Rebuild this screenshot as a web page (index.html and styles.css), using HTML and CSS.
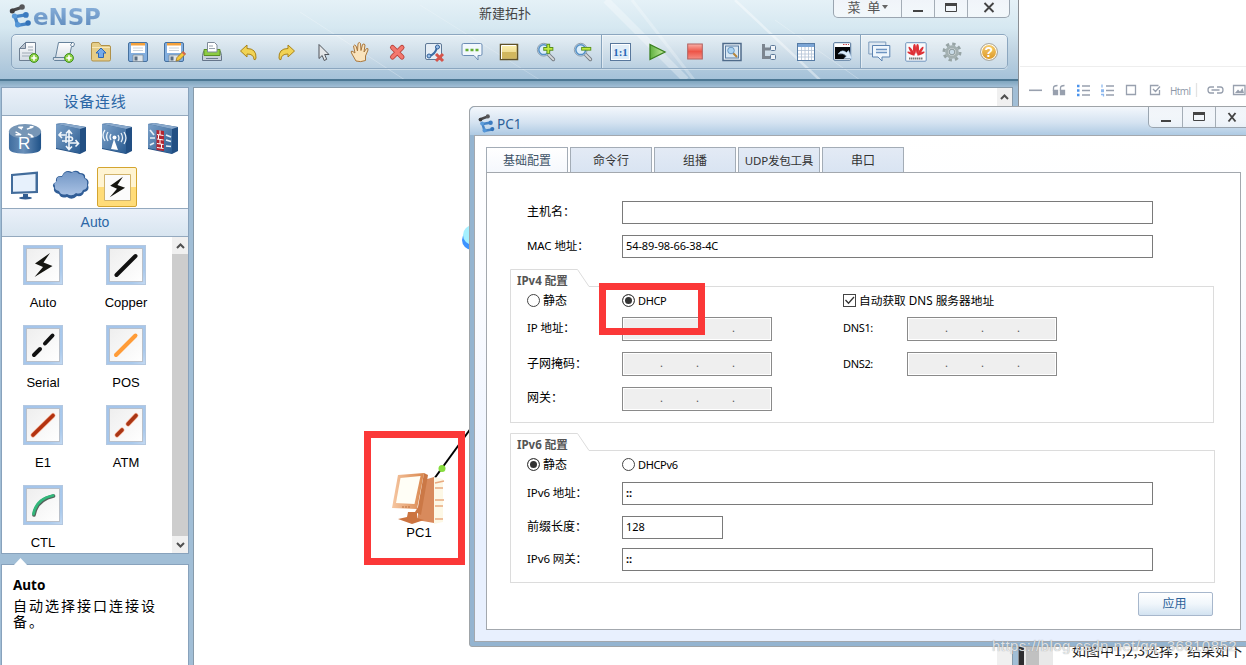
FILE: index.html
```html
<!DOCTYPE html>
<html lang="zh-CN">
<head>
<meta charset="utf-8">
<title>eNSP</title>
<link rel="stylesheet" href="styles.css">
</head>
<body>
<svg class="defs" width="0" height="0">
  <defs>
    <linearGradient id="gBlue" x1="0" y1="0" x2="1" y2="1"><stop offset="0" stop-color="#7ba0c8"/><stop offset=".5" stop-color="#5580ae"/><stop offset="1" stop-color="#285a90"/></linearGradient>
    <linearGradient id="gDrum" x1="0" y1="0" x2="1" y2="0"><stop offset="0" stop-color="#3f6d9f"/><stop offset=".45" stop-color="#6a90ba"/><stop offset="1" stop-color="#1f5288"/></linearGradient>
    <linearGradient id="gPage" x1="0" y1="0" x2="0" y2="1"><stop offset="0" stop-color="#fff"/><stop offset="1" stop-color="#d3dbe4"/></linearGradient>
    <linearGradient id="gGold" x1="0" y1="0" x2="0" y2="1"><stop offset="0" stop-color="#fff3b0"/><stop offset="1" stop-color="#e0c878"/></linearGradient>
    <linearGradient id="gBox" x1="0" y1="0" x2="1" y2="1"><stop offset="0" stop-color="#eee"/><stop offset="1" stop-color="#fff"/></linearGradient>
    <linearGradient id="gFrame" x1="0" y1="0" x2="1" y2="1"><stop offset="0" stop-color="#a4c4ea"/><stop offset=".8" stop-color="#a9c9ec"/><stop offset="1" stop-color="#c5daf2"/></linearGradient>
    <linearGradient id="gRed" x1="0" y1="0" x2="0" y2="1"><stop offset="0" stop-color="#f9b0a8"/><stop offset=".5" stop-color="#ee5548"/><stop offset="1" stop-color="#f58f85"/></linearGradient>
    <linearGradient id="gGreen" x1="0" y1="0" x2="1" y2="0"><stop offset="0" stop-color="#5fb040"/><stop offset="1" stop-color="#c8eea0"/></linearGradient>
    <linearGradient id="gCloud" x1="0" y1="0" x2="0" y2="1"><stop offset="0" stop-color="#7397c6"/><stop offset="1" stop-color="#a9c2e4"/></linearGradient>
    <linearGradient id="gPc" x1="0" y1="0" x2="1" y2="0"><stop offset="0" stop-color="#f6c7a2"/><stop offset="1" stop-color="#d9874e"/></linearGradient>
    <symbol id="plus" viewBox="0 0 10 10"><circle cx="5" cy="5" r="4.400" fill="#8fd045" stroke="#3f8f1d"/><path d="M5 2.300v5.400M2.300 5h5.400" stroke="#fff" stroke-width="1.600"/></symbol>
    <symbol id="logo" viewBox="0 0 22 22"><path d="M3 6L12 3" stroke="#4a4a4c" stroke-width="3" stroke-linecap="round"/><circle cx="3" cy="6.500" r="2.300" fill="#3e3e40"/><circle cx="12" cy="2.800" r="2.500" fill="#57575a"/><path d="M15.500 10L5.500 11.500L8 19.500L17.500 18" fill="none" stroke="#4584c6" stroke-width="3" stroke-linejoin="round"/><circle cx="5" cy="11" r="2.400" fill="#5b9bd9"/><circle cx="15.500" cy="10" r="2.600" fill="#3c7bc0"/><circle cx="8" cy="19" r="2.500" fill="#5597d8"/><circle cx="17.500" cy="17.500" r="2.500" fill="#3272b8"/></symbol>
    <symbol id="bolt" viewBox="0 0 40 40"><path d="M27 8L12 18.500L20 22L11.500 32L29.500 21L20.500 17.500Z" fill="#151510"/></symbol>
    <symbol id="frame" viewBox="0 0 40 40"><rect x=".5" y=".5" width="39" height="39" fill="url(#gFrame)" stroke="#b4c8e0"/><rect x="3.500" y="3.500" width="33" height="33" fill="url(#gBox)" stroke="#b9c0ca"/></symbol>
    <symbol id="floppy" viewBox="0 0 22 22"><rect x="1.500" y="1.500" width="19" height="19" rx="1.500" fill="#83aede" stroke="#46719f"/><path d="M4 2h14v10H4z" fill="#fff"/><path d="M4 2h14v2.500H4z" fill="#f5a13a"/><path d="M6 7h10M6 9.500h10" stroke="#ccd3da"/><path d="M6 14h10v6.500H6z" fill="#dde3e8" stroke="#7a8894" stroke-width=".7"/><path d="M7.500 15.500h3v4h-3z" fill="#5b6d80"/></symbol>
    <symbol id="lens" viewBox="0 0 24 24"><path d="M15 15l5 5" stroke="#767d84" stroke-width="4" stroke-linecap="round"/><path d="M15 15l5 5" stroke="#d4d7d9" stroke-width="2" stroke-linecap="round"/><circle cx="9.500" cy="9.500" r="7" fill="#c2dcf1" stroke="#8c9aa8"/><circle cx="9.500" cy="9.500" r="5.300" fill="#dceefa" stroke="#5590c5" stroke-width="1.600"/></symbol>
  </defs>
</svg>

<div class="desktop">
  <!-- Web editor behind the simulator -->
  <div class="editor">
    <div class="editor-tools">
      <svg width="226" height="20" viewBox="0 0 226 20" fill="none" stroke="#98a0ae" stroke-width="1.300">
        <path d="M9 10.300h13" stroke-width="1.600"/>
        <path d="M33.500 10.500h4v4h-4zM40.500 10.500h4v4h-4z" fill="#98a0ae"/><path d="M33.500 11V8q0-2.500 4-2.500M40.500 11V8q0-2.500 4-2.500"/>
        <path d="M62 6h8M62 10.500h8M62 15h8"/><path d="M57 6h2.500M57 10.500h2.500M57 15h2.500" stroke="#4b93ec" stroke-width="2.500"/>
        <path d="M86 6h8M86 10.500h8M86 15h8"/><path d="M82 4.500v3M81 10h3M81 11.500h3M81 14.500h3M83.500 14v2.500" stroke="#8cb8ef"/>
        <path d="M106.500 5.500h9v9h-9z"/><path d="M139.500 10v4.500h-9v-9h8M133 9l2.500 2.500 4.500-5"/>
        <path d="M176.500 3v14" stroke="#e3e3e3"/>
        <path d="M194 7h-3.500q-2.500 0-2.500 3t2.500 3h3.500M197 7h3.500q2.500 0 2.500 3t-2.500 3h-3.500M191.500 10h8"/>
        <path d="M213.500 5.500h11.500v9h-11.500z"/><path d="M215 13l3-3.500 2 2 2.500-3.500 1.500 5z" fill="#98a0ae" stroke="none"/>
      </svg>
      <span class="html-tool">Html</span>
    </div>
  </div>

  <div class="doc-strip"><i class="s-dark"></i><i class="s-grey"></i><i class="s-light"></i></div>
  <div class="doc-line">如图中1,2,3选择，结果如下</div>

  <!-- Simulator window -->
  <section class="ensp">
    <header class="ensp-head">
      <svg class="rays" width="1018" height="79" viewBox="0 0 1018 79" fill="none" stroke="#fff">
        <path d="M300 12L405 80" stroke-opacity=".25"/><path d="M420 5L540 80" stroke-opacity=".2"/>
        <path d="M606 0L686 80" stroke-opacity=".3" stroke-width="7"/><path d="M632 0L694 80" stroke-opacity=".25" stroke-width="3"/>
        <path d="M735 0L820 80" stroke-opacity=".4" stroke-width="2.500"/><path d="M775 20L860 80" stroke-opacity=".25"/>
      </svg>
      <div class="titlebar">
        <div class="brand"><svg width="24" height="24"><use href="#logo"/></svg><b>eNSP</b></div>
        <div class="title">新建拓扑</div>
        <div class="win-buttons">
          <span class="menu">菜&nbsp;&nbsp;单<i class="caret"></i></span>
          <span><svg width="12" height="12" viewBox="0 0 12 12"><path d="M1 9h10" stroke="#444" stroke-width="2"/></svg></span>
          <span><svg width="12" height="12" viewBox="0 0 12 12"><path d="M.5 1.500h11v8h-11z" fill="none" stroke="#444"/><path d="M0 2.500h12" stroke="#444" stroke-width="3"/></svg></span>
          <span class="close"><svg width="12" height="11" viewBox="0 0 12 11"><path d="M1.500 1l9 9M10.500 1l-9 9" stroke="#444" stroke-width="1.900"/></svg></span>
        </div>
      </div>
      <nav class="toolbar">
        <div class="tools first">
          <span><svg width="22" height="22" viewBox="0 0 22 22"><path d="M7.500 1.500h10v18H1.500v-12z" fill="url(#gPage)" stroke="#6e7f92"/><path d="M7.500 1.500v6h-6z" fill="#b9c2cc" stroke="#6e7f92"/><path d="M10 6h5M10 9h5M4 12h11M4 15h8" stroke="#9ea9b5"/><use href="#plus" x="11" y="12" width="10" height="10"/></svg></span>
          <span><svg width="24" height="22" viewBox="0 0 24 22"><path d="M6.500 1.500h15q2 1 0 4h-2l-3 14H2.500q-2-1-1-3h2z" fill="url(#gPage)" stroke="#66829b"/><path d="M1.500 16.500h14M19 5q-1-2 1-3" stroke="#66829b" fill="none"/><use href="#plus" x="12" y="12" width="10" height="10"/></svg></span>
          <span><svg width="22" height="22" viewBox="0 0 22 22"><path d="M1.500 3q0-1.500 1.500-1.500h6l2 3h8q1.500 0 1.500 1.500v12.500q0 1.500-1.500 1.500H3q-1.500 0-1.500-1.500z" fill="#e5cd88" stroke="#b0914a"/><path d="M2 6.500h18" stroke="#f7e8b8"/><path d="M11 7l5 5h-2.500v4.500h-5V12H6z" fill="#74aaea" stroke="#2c67b5"/></svg></span>
          <span><svg width="22" height="22"><use href="#floppy"/></svg></span>
          <span><svg width="23" height="22" viewBox="0 0 23 22"><use href="#floppy" width="22" height="22"/><path d="M13 20l1-3.500 6-6 2.500 2.500-6 6z" fill="#f6c83b" stroke="#9a7420" stroke-width=".8"/><path d="M19.500 11l2.500 2.500" stroke="#d8604f" stroke-width="2"/></svg></span>
          <span><svg width="22" height="22" viewBox="0 0 22 22"><path d="M2.500 10.500h17l1 4v5h-19v-5z" fill="#c7d0db" stroke="#65758a"/><path d="M3 8.500h16v6H3z" fill="#8dcc43" stroke="#5c8e26"/><path d="M6.500 1.500h7l2.500 2.500v7h-9.500z" fill="#fff" stroke="#7f8b99"/><path d="M8 5h4M8 7.500h6" stroke="#98a3af"/><path d="M5 17.500h12" stroke="#6c7b8d"/></svg></span>
          <span><svg width="20" height="20" viewBox="0 0 20 20"><path d="M1.500 9L8 3v3.500q9.500 0 9 9.500q-.5 2.500-2 1.500Q15 12 8 12V15z" fill="#f1d354" stroke="#a98318"/></svg></span>
          <span><svg width="20" height="20" viewBox="0 0 20 20"><path d="M18.500 9L12 3v3.500q-9.500 0-9 9.500q.5 2.500 2 1.500Q5 12 12 12V15z" fill="#f1d354" stroke="#a98318"/></svg></span>
          <span><svg width="14" height="20" viewBox="0 0 14 20"><path d="M3 2.500v14l3.200-3 2 5 2.500-1.200-2-4.800H13z" fill="#e4e6e8" stroke="#4e535a"/></svg></span>
          <span><svg width="20" height="22" viewBox="0 0 20 22"><path d="M6 20L2 13q-2-3 0-3l3 2L3.500 5q1-2 2.500 0l1.500 5L8 2.500q1.500-2 2.500 0l.5 7 1.500-6q2-1.500 2.500.5l-1 7 2.500-3.500q2-.5 1.500 1.500L15.500 15v4.500q-5 2-9.500.5z" fill="#fae3bc" stroke="#a9773d"/></svg></span>
          <span><svg width="18" height="18" viewBox="0 0 18 18"><path d="M4.500 4.500l9.500 9.500M14 4.500l-9.500 9.500" stroke="#b8443d" stroke-width="5" stroke-linecap="round"/><path d="M4.500 4.500l9.500 9.500M14 4.500l-9.500 9.500" stroke="#f3786e" stroke-width="3.200" stroke-linecap="round"/></svg></span>
          <span><svg width="22" height="22" viewBox="0 0 22 22"><rect x="2.500" y="2.500" width="16" height="16" rx="1.500" fill="#e6eef5" stroke="#5e7896"/><path d="M6 15Q12.500 13.500 14 6" stroke="#3d6ea5" stroke-width="2" fill="none"/><circle cx="6" cy="15" r="2" fill="#9dc0e8" stroke="#2f5f99"/><circle cx="14.500" cy="6" r="2" fill="#9dc0e8" stroke="#2f5f99"/><path d="M13 13l7 7M20 13l-7 7" stroke="#d5544b" stroke-width="3"/></svg></span>
          <span><svg width="22" height="20" viewBox="0 0 22 20"><path d="M2.500 1.500h17q1.500 0 1.500 1.500v9q0 1.500-1.500 1.500H17v4.500l-4-4.500H2.500Q1 13.500 1 12V3q0-1.500 1.500-1.500z" fill="#f2f8fd" stroke="#6b8cb4"/><path d="M4.500 8h3M9.500 8h3M14.500 8h3" stroke="#63ad32" stroke-width="2.600"/></svg></span>
          <span><svg width="20" height="18" viewBox="0 0 20 18"><rect x="1.500" y="1.500" width="17" height="15" fill="url(#gGold)" stroke="#5f5127" stroke-width="1.500"/><path d="M3 9h14v6H3z" fill="#d1b75e"/><path d="M2.500 16V2.500H17" fill="none" stroke="#fff"/></svg></span>
          <span><svg width="22" height="22" viewBox="0 0 24 24"><use href="#lens" width="24" height="24"/><path d="M14.500 3v11M9 8.500h11" stroke="#57901d" stroke-width="4"/><path d="M14.500 4v9M10 8.500h9" stroke="#c1e93f" stroke-width="2"/></svg></span>
          <span><svg width="22" height="22" viewBox="0 0 24 24"><use href="#lens" width="24" height="24"/><path d="M10 8.500h11" stroke="#57901d" stroke-width="4"/><path d="M11 8.500h9" stroke="#c1e93f" stroke-width="2"/></svg></span>
        </div>
        <div class="tools">
          <span><i class="ratio">1:1</i></span>
          <span><svg width="19" height="20" viewBox="0 0 19 20"><path d="M2 2.500v15l15-7.500z" fill="url(#gGreen)" stroke="#3a8020" stroke-width="1.300"/></svg></span>
          <span><svg width="16" height="17" viewBox="0 0 16 17"><rect x=".7" y="1" width="14.600" height="15" fill="url(#gRed)" stroke="#b0605e"/></svg></span>
          <span><svg width="20" height="20" viewBox="0 0 20 20"><rect x="1" y="1.500" width="18" height="17" fill="#e6eff6" stroke="#4f6b8a" stroke-width="1.500"/><rect x="3.500" y="4" width="13" height="12" fill="#d6e6f3" stroke="#5b7da2"/><path d="M11 11l4 4" stroke="#b6853a" stroke-width="2"/><circle cx="9" cy="8.500" r="3.300" fill="#abd3f2" stroke="#6b96bf"/></svg></span>
          <span><svg width="18" height="18" viewBox="0 0 18 18"><path d="M3.500 1v13.500H10M3.500 6H10" fill="none" stroke="#7c858f" stroke-width="3"/><rect x="10.500" y="2.500" width="5" height="5" rx="1" fill="#f0f4f8" stroke="#5c7898"/><rect x="10.500" y="11.500" width="5" height="5" rx="1" fill="#f0f4f8" stroke="#5c7898"/></svg></span>
          <span><svg width="18" height="18" viewBox="0 0 18 18"><rect x=".5" y=".5" width="17" height="17" fill="#fff" stroke="#567ba4"/><path d="M1 1h16v3H1z" fill="#7ba5d5"/><path d="M1 7.500h16M1 11h16M1 14h16M4.500 4v13M8 4v13M11.500 4v13M14.500 4v13" stroke="#b3c3d6" stroke-width=".8"/></svg></span>
          <span><svg width="20" height="19" viewBox="0 0 20 19"><rect x=".7" y=".7" width="17" height="17.500" rx="1" fill="#fff" stroke="#4c6e95"/><path d="M2 5h15v12H2z" fill="#050608"/><path d="M10 2.500h6" stroke="#c44" stroke-dasharray="1.500 1"/><path d="M5 12q4-5.500 8.500-1.500l2-2 3.500 8h-8l2.500-2.500q-3.500-3.500-8.500-2z" fill="#dcecfa" stroke="#a9c9e8" stroke-width=".5"/></svg></span>
        </div>
        <div class="tools last">
          <span><svg width="23" height="21" viewBox="0 0 23 21"><path d="M.8 1h17v12h-17z" fill="#dfe9f2" stroke="#7d9cbd"/><path d="M4.500 4.500h17.300v11.500H14v4l-4-4H4.500z" fill="#eff6fc" stroke="#5d83b1"/><path d="M8 8.500h11M8 11.500h11" stroke="#6d94c1" stroke-width="1.400"/></svg></span>
          <span><svg width="22" height="20" viewBox="0 0 22 20"><rect x=".7" y=".7" width="20.500" height="18.500" rx="1" fill="#f8fafc" stroke="#6f94bd"/><g fill="#de3036"><ellipse cx="9.500" cy="7" rx="1.500" ry="5"/><ellipse cx="12.500" cy="7" rx="1.500" ry="5"/><ellipse cx="6.500" cy="9" rx="1.300" ry="5" transform="rotate(-33 6.500 9)"/><ellipse cx="15.500" cy="9" rx="1.300" ry="5" transform="rotate(33 15.500 9)"/><ellipse cx="6" cy="11.500" rx="1.200" ry="4" transform="rotate(-65 6 11.500)"/><ellipse cx="16" cy="11.500" rx="1.200" ry="4" transform="rotate(65 16 11.500)"/></g><path d="M4 16.500h14" stroke="#777" stroke-width="1.800" stroke-dasharray="1.500 .5"/></svg></span>
          <span><svg width="20" height="20" viewBox="0 0 20 20"><circle cx="10" cy="10" r="8" fill="none" stroke="#97a4a5" stroke-width="3" stroke-dasharray="3.300 2.980"/><circle cx="10" cy="10" r="5.300" fill="#d3dadb" stroke="#a3b0b1" stroke-width="3"/><circle cx="10" cy="10" r="2.800" fill="#c9dbe7" stroke="#8b999c"/></svg></span>
          <span><i class="help">?</i></span>
        </div>
      </nav>
    </header>

    <div class="ensp-body">
      <aside class="sidebar">
        <div class="palette">
          <h2 class="bar">设备连线</h2>
          <div class="devices">
            <span><svg width="34" height="33" viewBox="0 0 36 34"><path d="M1 8v18q0 6 17 6t17-6V8z" fill="url(#gDrum)"/><ellipse cx="18" cy="8.500" rx="17" ry="7.800" fill="#7796b6"/><path d="M8 9l6 3M8 12h5M15 6l-4-2h5M21 11l5 2M24 14h3M20 6l6-2M23 3.500h4" stroke="#fff" stroke-width="1.500" fill="none"/></svg><b class="r">R</b></span>
            <span><svg width="34" height="34" viewBox="0 0 34 34"><path d="M2 2l6-1 24 4v24l-6 3L2 27z" fill="#224f83"/><path d="M2 2l24 5v24.500L2 26z" fill="url(#gBlue)"/><path d="M2 2l6-1 24 4-6 2z" fill="#88a8cb"/><path d="M5 13h8M7.500 10L5 13l3 3M15 19V9M12 11.500L15 8.500l3 3.500M15 19v8M12 24l3 3.500 3-3M16 21h8M21.500 18l3 3.500-3 3M12 21v-6q6-1 6.500 1.500T15 19H8" fill="none" stroke="#f2f7fb" stroke-width="1.600"/></svg></span>
            <span><svg width="34" height="34" viewBox="0 0 34 34"><path d="M2 2l6-1 24 4v24l-6 3L2 27z" fill="#224f83"/><path d="M2 2l24 5v24.500L2 26z" fill="url(#gBlue)"/><path d="M2 2l6-1 24 4-6 2z" fill="#88a8cb"/><path d="M14 17l-3 10 7 1z" fill="#fff"/><circle cx="14.500" cy="15.500" r="2" fill="#fff"/><path d="M11 12q-2 3 0 6M8 10q-3 4.500 0 9M5 8q-4 5 0 11M18 13q2 3 0 6M21 11q3 5 0 9M24 10q4 6 0 12" fill="none" stroke="#e9f1f8" stroke-width="1.300"/></svg></span>
            <span><svg width="34" height="34" viewBox="0 0 34 34"><path d="M2 2l6-1 24 4v24l-6 3L2 27z" fill="#224f83"/><path d="M2 2l24 5v24.500L2 26z" fill="url(#gBlue)"/><path d="M2 2l6-1 24 4-6 2z" fill="#88a8cb"/><path d="M10.500 8l7.500 1v20l-7.500-1z" fill="#b32430"/><path d="M11 12.500l6.500 1M11 17l6.500 1M11 21.500l6.500 1M11 25.500l6.500 1M14 8.500v4.500M14 18v4M12.500 13v4M15.500 22v4" stroke="#fff"/><path d="M4 8l4 5M4 16h5M4 23l4-2M20 13l5 2M20 18l5 1.500M20 24l5 .5" stroke="#e6eef6" stroke-width="1.700"/></svg></span>
            <span><svg width="34" height="32" viewBox="0 0 34 32"><path d="M3 5l27-2.500v21.500L3 25z" fill="#426c9b"/><path d="M5 7l22.500-2v17L5 22.700z" fill="#e7f1fc"/><path d="M15 25h5v4h-5z" fill="#325e91"/><ellipse cx="17.500" cy="29" rx="6.500" ry="1.500" fill="#315c90"/></svg></span>
            <span><svg width="38" height="32" viewBox="0 0 38 32"><path d="M7 25q-6-1-5-6-3-4 2-6-1-7 6-6 3-7 10-4 5-3 8 1 6 0 5 5 5 2 3 7 2 6-4 7-1 5-7 4-5 5-10 1-6 2-8-3z" fill="#315e97"/><path d="M7 22q-5-1-4-5-2-3 2-5-1-5 5-4 3-7 9-4 5-3 8 1 5 0 5 4 4 2 3 6 1 5-4 6-2 5-7 3-4 4-9 1-6 2-8-3z" fill="url(#gCloud)"/></svg></span>
            <span class="selected"><svg width="27" height="27" viewBox="0 0 27 27"><path d="M.5.5h26v26H.5z" fill="#fbfbfb" stroke="#d1b46d"/><use href="#bolt" x="-4" y="-4" width="34" height="34"/></svg></span>
          </div>
          <h2 class="bar auto">Auto</h2>
          <div class="cables">
            <div class="cable-grid">
              <figure><svg width="40" height="40"><use href="#frame"/><use href="#bolt"/></svg><figcaption>Auto</figcaption></figure>
              <figure><svg width="40" height="40"><use href="#frame"/><path d="M10.500 30L29.500 11" stroke="#111" stroke-width="4" stroke-linecap="round"/></svg><figcaption>Copper</figcaption></figure>
              <figure><svg width="40" height="40"><use href="#frame"/><path d="M11 30l6-6M22 18.500l7.500-8" stroke="#111" stroke-width="4" stroke-linecap="round"/></svg><figcaption>Serial</figcaption></figure>
              <figure><svg width="40" height="40"><use href="#frame"/><path d="M10 30L29.500 10.500" stroke="#ff9c38" stroke-width="4" stroke-linecap="round"/></svg><figcaption>POS</figcaption></figure>
              <figure><svg width="40" height="40"><use href="#frame"/><path d="M10 30L30 10.500" stroke="#f5b69d" stroke-width="5" stroke-linecap="round"/><path d="M10 30L30 10.500" stroke="#b33210" stroke-width="3.700" stroke-linecap="round"/></svg><figcaption>E1</figcaption></figure>
              <figure><svg width="40" height="40"><use href="#frame"/><path d="M11 30l5-5M22 19l8-8.500" stroke="#f5b69d" stroke-width="5" stroke-linecap="round"/><path d="M11 30l5-5M22 19l8-8.500" stroke="#a93514" stroke-width="3.700" stroke-linecap="round"/></svg><figcaption>ATM</figcaption></figure>
              <figure><svg width="40" height="40"><use href="#frame"/><path d="M11 30Q13.500 15 30.500 11" fill="none" stroke="#55615a" stroke-width="3.600" stroke-linecap="round"/><path d="M10.500 29Q13 14 30 10.500" fill="none" stroke="#32b77b" stroke-width="2.800" stroke-linecap="round"/></svg><figcaption>CTL</figcaption></figure>
            </div>
            <div class="scroll">
              <i><svg width="9" height="6"><path d="M1 5l3.500-3.500L8 5" fill="none" stroke="#505050" stroke-width="2"/></svg></i>
              <i><svg width="9" height="6"><path d="M1 1l3.500 3.500L8 1" fill="none" stroke="#505050" stroke-width="2"/></svg></i>
            </div>
          </div>
        </div>
        <svg class="notch" width="16" height="8" viewBox="0 0 16 8"><path d="M0 8L7.500 0L15 8z" fill="#fff"/></svg>
        <div class="info"><b>Auto</b><p>自动选择接口连接设备。</p></div>
      </aside>
      <main class="canvas">
        <svg class="topology" width="803" height="577" viewBox="194 88 803 577">
          <ellipse cx="472" cy="240" rx="10" ry="10" fill="#3d93ff"/><ellipse cx="473" cy="235" rx="10" ry="10" fill="#a5f0ff"/>
          <path d="M434 479L474 424" stroke="#000" stroke-width="2"/>
          <path d="M424 480l10-3v46l-17-3z" fill="#d88a5c"/><path d="M434 477l9 2v43l-9 2z" fill="#fdf8e6"/><path d="M435 483l9-2M435 488h8M435 500h9M435 506h8M435 519h8" stroke="#e9aa80" stroke-width="1.300"/>
          <path d="M398 475l26-2-7 36-25-1z" fill="url(#gPc)"/><path d="M400.500 478l20-2-6 28-18.500-1z" fill="#fffef6"/><path d="M424 473l4 2-7 40-6-3 3-5z" fill="#cb7846"/><path d="M408 512h9v6l7 2-12 4-14-5 9-2z" fill="#cc7440"/><path d="M402 507h8" stroke="#bd703d" stroke-dasharray="2 1"/>
          <circle cx="442" cy="468.500" r="3.500" fill="#86dc3e"/>
          <text x="419" y="537" text-anchor="middle" class="node-name">PC1</text>
        </svg>
        <div class="vscroll"><svg width="9" height="6"><path d="M1 5l3.500-3.500L8 5" fill="none" stroke="#505050" stroke-width="2"/></svg></div>
      </main>
    </div>
  </section>

  <!-- PC1 configuration dialog -->
  <section class="dialog">
    <header class="dialog-head">
      <svg width="18" height="19" viewBox="0 0 22 22" preserveAspectRatio="none"><use href="#logo"/></svg>
      <span class="dialog-title">PC1</span>
      <div class="win-buttons">
        <span><svg width="12" height="12" viewBox="0 0 12 12"><path d="M1 10h10" stroke="#444" stroke-width="2"/></svg></span>
        <span><svg width="12" height="12" viewBox="0 0 12 12"><path d="M.5 1.500h11v8h-11z" fill="none" stroke="#444"/><path d="M0 2.500h12" stroke="#444" stroke-width="3"/></svg></span>
        <span><svg width="10" height="12" viewBox="0 0 10 12"><path d="M1.500 2l7 8.500M8.500 2l-7 8.500" stroke="#444" stroke-width="1.900"/></svg></span>
      </div>
    </header>
    <div class="dialog-body">
      <div class="tabs"><span class="on">基础配置</span><span>命令行</span><span>组播</span><span class="udp">UDP发包工具</span><span>串口</span></div>
      <div class="panel">
        <div class="basic">
          <label class="zh">主机名：</label><div class="field"></div>
          <label>MAC 地址：</label><div class="field mac">54-89-98-66-38-4C</div>
        </div>

        <div class="group v4">
          <div class="group-head"><svg width="79" height="18" viewBox="0 0 79 18"><path d="M.5 18V.5H67.500L79 17.500" fill="none" stroke="#dcdcdc"/></svg><b>IPv4 配置</b></div>
          <div class="group-body">
            <div class="row choice"><span class="zh"><i class="radio"></i>静态</span><span class="latin"><i class="radio checked"></i>DHCP</span><span class="dns"><i class="check"><svg width="11" height="11"><path d="M1.500 5l3 3.200L10 2" fill="none" stroke="#333" stroke-width="1.300"/></svg></i>自动获取 DNS 服务器地址</span></div>
            <div class="row"><label>IP 地址：</label><div class="ip"><i>.</i><i>.</i><i>.</i></div><label class="latin">DNS1:</label><div class="ip"><i>.</i><i>.</i><i>.</i></div></div>
            <div class="row mask"><label class="zh">子网掩码：</label><div class="ip"><i>.</i><i>.</i><i>.</i></div><label class="latin">DNS2:</label><div class="ip"><i>.</i><i>.</i><i>.</i></div></div>
            <div class="row"><label class="zh">网关：</label><div class="ip"><i>.</i><i>.</i><i>.</i></div></div>
          </div>
        </div>

        <div class="group v6">
          <div class="group-head"><svg width="79" height="18" viewBox="0 0 79 18"><path d="M.5 18V.5H67.500L79 17.500" fill="none" stroke="#dcdcdc"/></svg><b>IPv6 配置</b></div>
          <div class="group-body">
            <div class="row choice"><span class="zh"><i class="radio checked"></i>静态</span><span class="latin"><i class="radio"></i>DHCPv6</span></div>
            <div class="row"><label>IPv6 地址：</label><div class="field any">::</div></div>
            <div class="row prefix"><label class="zh">前缀长度：</label><div class="field">128</div></div>
            <div class="row"><label>IPv6 网关：</label><div class="field any">::</div></div>
          </div>
        </div>
        <button class="apply">应用</button>
      </div>
    </div>
  </section>

  <div class="mark mark-pc"></div>
  <div class="mark mark-dhcp"></div>
  <div class="watermark">https://blog.csdn.net/qq_36810852</div>
</div>
</body>
</html>
```
FILE: styles.css
```css
* { box-sizing: border-box; }
body { margin: 0; overflow: hidden; font-family: "Noto Sans", "Noto Sans CJK SC", sans-serif; font-size: 11px; color: #000; background: #fff; }
svg { display: block; flex: none; }
i { font-style: normal; }
h2, p, figure { margin: 0; }
.defs { position: absolute; }
.desktop { position: relative; width: 1246px; height: 665px; overflow: hidden; background: #fff; }

/* background page */
.editor { position: absolute; left: 1020px; top: 0; width: 226px; height: 107px; padding-top: 66px; }
.editor-tools { position: relative; border-top: 1px solid #eee; padding: 13px 0 0 0; height: 40px; }
.html-tool { position: absolute; left: 150px; top: 17px; font: 10px/14px "Open Sans", sans-serif; color: #8d97a8; letter-spacing: -.6px; }
.doc-strip { position: absolute; left: 1019px; top: 646px; width: 34px; height: 19px; display: flex; background: #e9e9e9; }
.s-dark { width: 5px; background: #2d2d2f; margin-right: 2px; }
.s-grey { width: 13px; background: #c1c1c1; margin-right: 1px; }
.s-light { flex: 1; }
.doc-line { position: absolute; left: 1072px; top: 640px; width: 180px; font: 14px/20px "Noto Sans CJK SC", sans-serif; white-space: nowrap; color: #222; }

/* main window */
.ensp { position: absolute; left: 0; top: 0; width: 1019px; height: 665px; background: #a1bed6; border-right: 1px solid #8b8f94; display: flex; flex-direction: column; }
.ensp-head { position: relative; height: 81px; flex: none; border-bottom: 2px solid #4c7793; background: linear-gradient(#e5f1f7 0, #d6e8f1 35%, #bfd3e2 65%, #a5c2d9 100%); }
.rays { position: absolute; left: 0; top: 0; }
.titlebar { position: relative; display: flex; height: 34px; }
.brand { width: 470px; padding: 4px 0 0 9px; display: flex; }
.brand b { font: bold 23px/26px "DejaVu Sans", sans-serif; background: linear-gradient(#8bb2dc, #5381b5); -webkit-background-clip: text; background-clip: text; color: transparent; letter-spacing: -.1px; }
.title { width: 363px; padding: 3px 0 0 9px; font: 13px/19px "Noto Sans CJK SC", sans-serif; color: #444; }
.win-buttons { display: flex; height: 18px; border: 1px solid #9aa5b0; border-top: 0; border-radius: 0 0 5px 5px; background: linear-gradient(#f0f4f9, #fff9); }
.win-buttons span { width: 33px; border-left: 1px solid #a4adb6; display: flex; justify-content: center; padding-top: 2px; }
.win-buttons span:first-child { border-left: 0; }
.win-buttons .menu { width: 67px; font: 13px/14px "Noto Sans CJK SC", sans-serif; color: #555; padding: 0; height: 14px; letter-spacing: .3px; align-items: center; }
.win-buttons .close { width: 42px; }
.caret { border: 3px solid transparent; border-top: 4px solid #666; border-bottom: 0; margin-left: 1px; }
.toolbar { position: relative; margin-left: 11px; width: 997px; height: 35px; border: 1px solid #8ba6bf; border-radius: 5px; display: flex; background: linear-gradient(#ffffff70, #ffffff20); box-shadow: inset 0 1px #ffffff80, 0 1px #ffffff60; }
.tools { display: flex; width: 259px; border-right: 1px solid #87a4bd; box-shadow: 1px 0 #ffffff70; }
.tools.first { width: 590px; }
.tools.first span:first-child { width: 33px; }
.tools.last { width: 147px; border: 0; box-shadow: none; background: #ffffff38; padding-left: 0; }
.tools span { width: 37.1px; flex: none; display: flex; align-items: center; justify-content: center; }
.tools.last span { width: 36.500px; }
.ratio { width: 21px; height: 18px; border: 1px solid #58779c; background: #e0edf8; box-shadow: inset 0 0 0 1px #fff; color: #2867b5; font: bold 11px/16px "Liberation Serif", serif; text-align: center; }
.help { width: 18px; height: 18px; border-radius: 50%; border: 1px solid #a9aaa5; background: linear-gradient(#f6ce70, #dc9724); box-shadow: inset 0 0 0 1px #fff; color: #fff; font: bold 14px/16px "Liberation Sans", sans-serif; text-align: center; }

.ensp-body { flex: 1; display: flex; padding: 7px 5px 0 2px; background: linear-gradient(#7fa5be, #a1bed6 6px); }
.sidebar { width: 187px; margin-left: -1px; margin-right: 5px; display: flex; flex-direction: column; font-family: "Liberation Sans", "Noto Sans CJK SC", sans-serif; }
.palette { height: 467px; margin-top: -1px; border: 1px solid #88a2bc; background: #fff; display: flex; flex-direction: column; width: 188px; }
.bar { height: 28px; flex: none; font: 15px/27px "Noto Sans CJK SC", sans-serif; color: #2b66a5; text-align: center; background: linear-gradient(#eaf0f9, #d8e5f0); border-bottom: 1px solid #94a9be; letter-spacing: .8px; }
.bar:first-child { line-height: 26px; }
.bar.auto { font: 14px/27px "Liberation Sans", sans-serif; border-top: 1px solid #94a9be; letter-spacing: 0; height: 29px; }
.devices { height: 92px; display: grid; grid-template-columns: repeat(4, 46px); grid-template-rows: 46px 46px; }
.devices span { position: relative; display: flex; align-items: center; justify-content: center; }
.r { position: absolute; left: 16px; top: 17px; font: 17px/22px "Liberation Sans", sans-serif; color: #fff; }
.devices .selected { width: 40px; height: 40px; align-self: center; margin: 4px 0 0 3px; border: 1px solid #d4a52f; background: linear-gradient(#fff4d2 50%, #ffdc79 50%); border-radius: 2px; }
.cables { display: flex; flex: 1; min-height: 0; }
.cable-grid { width: 170px; display: grid; grid-template-columns: 82px 84px; grid-auto-rows: 80px; padding-top: 8px; }
.cable-grid figure { display: flex; flex-direction: column; align-items: center; font-size: 13px; height: 70px; }
.cable-grid figcaption { margin-top: 9px; line-height: 18px; }
.scroll { width: 16px; background: #cdcdcd; display: flex; flex-direction: column; justify-content: space-between; }
.scroll i { height: 17px; background: #f0f0f0; display: flex; align-items: center; justify-content: center; }
.notch { position: relative; z-index: 1; margin: 4px 0 0 12px; }
.info { flex: 1; width: 188px; margin-top: -2px; background: #fff; border: 1px solid #88a2bc; border-bottom: 0; padding: 11px 20px 0 11px; }
.info b { display: block; font: bold 13.500px/18px "Noto Sans", sans-serif; }
.info p { font: 14px/16px "Noto Sans CJK SC", sans-serif; letter-spacing: 2px; margin-top: 3px; width: 160px; }
.canvas { flex: 1; min-width: 0; margin-top: -1px; display: flex; background: #fff; border: 1px solid #879bab; }
.node-name { font: 13px "Liberation Sans", sans-serif; }
.vscroll { flex: 1; background: #f0f0f0; padding: 6px 0 0 3px; }

/* dialog */
.dialog { position: absolute; left: 469px; top: 106px; width: 800px; height: 541px; border: 1px solid #9fa4a8; border-radius: 5px 0 0 3px; background: #94b4d0; display: flex; flex-direction: column; padding-bottom: 4px; }
.dialog-head { height: 28px; flex: none; display: flex; padding-left: 8px; border-radius: 5px 0 0 0; background: linear-gradient(#f3f7fc, #d5e3f1 55%, #aecae3); }
.dialog-head > svg { margin-top: 7px; }
.dialog-title { width: 652px; padding-left: 1px; font: 13.500px/34px "Noto Sans", sans-serif; color: #2c5f98; }
.dialog-head .win-buttons { height: 21px; width: 110px; }
.dialog-head .win-buttons span { padding-top: 4px; }
.dialog-body { flex: 1; margin-left: 4px; border: 1px solid #a3a8ae; border-right: 0; background: linear-gradient(#fff, #fbfcff 30%, #e8f0fe 80%); padding: 11px 0 0 11px; }
.tabs { display: flex; gap: 2px; height: 25px; }
.tabs span { width: 82px; border: 1px solid #a3acb6; border-bottom: 0; background: linear-gradient(#e3eaf5, #d9e4f2); font: 12px/25px "Noto Sans", "Noto Sans CJK SC", sans-serif; color: #333; text-align: center; white-space: nowrap; }
.tabs .on { background: linear-gradient(#fff, #f5f8fd); color: #405468; }
.tabs .udp { font-size: 11.500px; letter-spacing: -.2px; }
.panel { width: 755px; height: 458px; background: #fff; border: 1px solid #a3a8ae; padding: 28px 0 0 23px; }
.panel label, .choice span { font: 11.500px/21px "Noto Sans", "Noto Sans CJK SC", sans-serif; white-space: nowrap; letter-spacing: -.1px; }
.panel .zh { font-size: 12px; letter-spacing: 0; }
.panel .latin { font-size: 11px; letter-spacing: -.35px; }
.panel .choice .dns { font-size: 11.700px; letter-spacing: 0; }
.basic { display: grid; grid-template-columns: 95px 531px; row-gap: 11px; padding-left: 17px; }
.field { height: 23px; width: 531px; border: 1px solid #7a7a7a; background: #fff; padding-left: 3px; line-height: 19px; letter-spacing: -.1px; }
.any { font-weight: bold; }
.group { width: 704px; }
.group.v4 { margin-top: 11px; }
.group.v6 { margin-top: 10px; width: 705px; }
.group-head { position: relative; display: flex; height: 18px; }
.group-head::after { content: ""; flex: 1; border-bottom: 1px solid #dcdcdc; }
.group-head b { position: absolute; left: 7px; top: 2px; font: bold 11.500px/20px "Noto Sans", "Noto Sans CJK SC", sans-serif; color: #555; }
.group-body { border: 1px solid #dcdcdc; border-top: 0; padding-left: 16px; height: 136px; display: flex; flex-direction: column; }
.v4 .row { display: grid; grid-template-columns: 95px 221px 64px 150px; margin-bottom: 11px; height: 24px; }
.v4 .row label { line-height: 22px; }
.v4 .mask label { line-height: 24px; }
.v6 .group-body { height: 132px; }
.v6 .row { display: grid; grid-template-columns: 95px 531px; height: 23px; margin-bottom: 11px; }
.v6 .prefix { margin-bottom: 9px; }
.v6 .prefix .field { width: 101px; }
.group .row.choice { height: 27px; margin-bottom: 4px; align-items: center; }
.group.v4 .row.choice { height: 28px; }
.choice span { display: flex; align-items: center; height: 20px; }
.radio { width: 13px; height: 13px; border: 1px solid #444; border-radius: 50%; margin-right: 3px; background: #fff; flex: none; }
.radio.checked { background: #333; box-shadow: inset 0 0 0 2px #fff; }
.check { width: 13px; height: 13px; border: 1px solid #444; margin-right: 3px; flex: none; }
.ip { width: 150px; height: 24px; border: 1px solid #8a8a8a; background: #efefef; box-shadow: inset 0 0 0 1px #fff; display: flex; padding-left: 4px; }
.ip i { width: 36px; text-align: right; line-height: 20px; color: #555; }
.apply { display: block; margin: 9px 0 0 628px; width: 75px; height: 24px; border: 1px solid #a7b7cc; border-radius: 2px; padding: 0 2px 4px 0; background: linear-gradient(#fff, #f0f6fb 50%, #d3e3f1); font: 12px "Noto Sans CJK SC", sans-serif; color: #2c6199; }

/* highlights */
.mark { position: absolute; border: 7px solid #fb3838; }
.mark-pc { left: 364px; top: 431px; width: 101px; height: 134px; }
.mark-dhcp { left: 599px; top: 283px; width: 106px; height: 52px; }
.watermark { position: absolute; left: 992px; top: 636px; font: 15px/20px "Liberation Sans", sans-serif; letter-spacing: .45px; color: #f4f6f8d0; text-shadow: 0 0 1px #777c; white-space: nowrap; }
```
